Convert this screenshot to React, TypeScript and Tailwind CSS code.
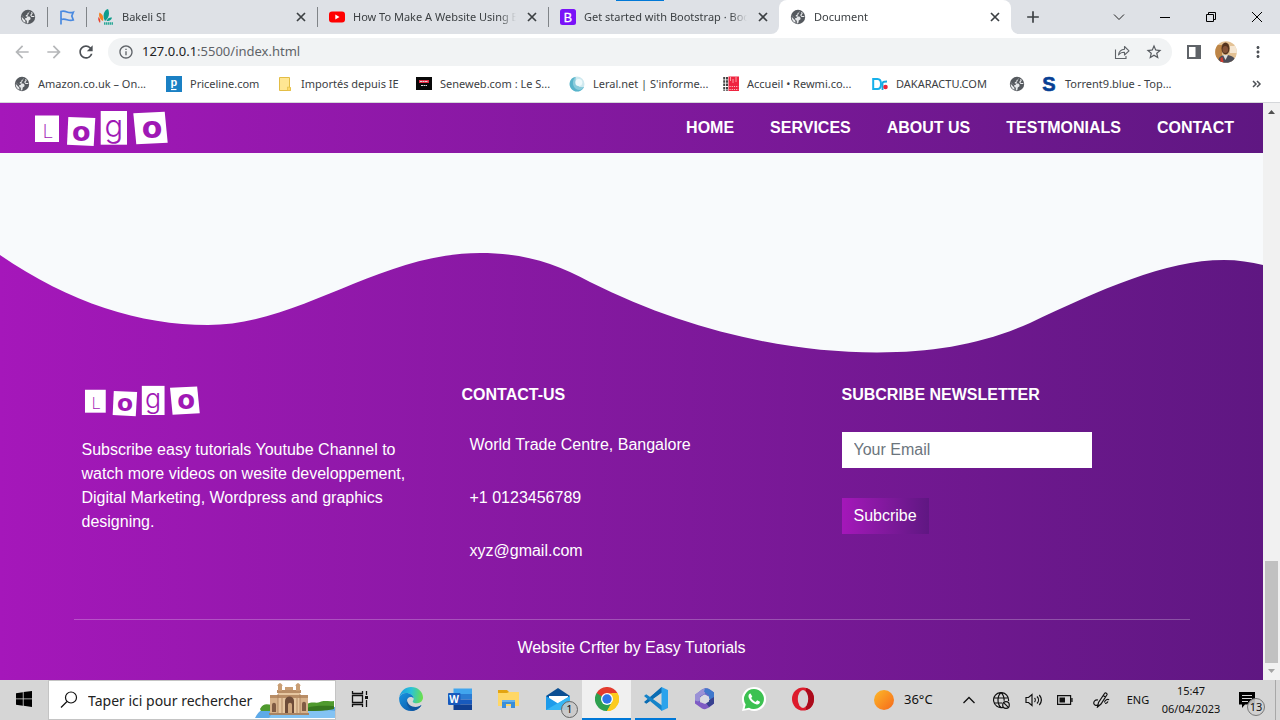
import React from "react";
import type { ReactNode } from "react";
import {
  MdAdd,
  MdArrowBack,
  MdArrowForward,
  MdInfoOutline,
  MdMoreVert,
  MdRefresh,
  MdStarBorder,
} from "react-icons/md";

/* ---------- Browser icons ---------- */

function Globe() {
  return (
    <svg viewBox="0 0 16 16" className="size-4 shrink-0">
      <circle cx="8" cy="8" r="7.200" fill="#55595e" />
      <path
        d="M10.200 1.600L9.800 3.300 7.500 4v1.500L5.800 6.300v1.200h3.600l1.100 1.300v1.400l-1.700 1.300-.5 2.700-1.500.2v-2.600L5.200 10.400V9L2 6.600 1.900 8l3.500 3.700v2.100A6.300 6.300 0 0 1 1.700 8.500L2 6.700l3 2.400h1.500"
        fill="#e6e8ea"
      />
      <path d="M14.300 7.500h-2.500l-1-1.500 1.300-1.300-.5-1.500" fill="none" stroke="#e6e8ea" strokeWidth="1.100" />
    </svg>
  );
}

function CloseIcon() {
  return (
    <svg viewBox="0 0 10 10" className="size-2.5" fill="none" stroke="#3c4043" strokeWidth="1.700">
      <path d="M1 1l8 8M9 1L1 9" />
    </svg>
  );
}

function FlagIcon() {
  return (
    <svg viewBox="0 0 16 16" className="size-4" fill="none" stroke="#4a8ae0" strokeWidth="1.700">
      <path d="M2 15.500V2.500C4.500 1.800 6 2.200 8 3s4 1 6.300.2L12.800 7l1.500 4c-2.300.8-4.300.4-6.300-.3s-4-.8-6-.2" />
    </svg>
  );
}

function BakeliIcon() {
  return (
    <svg viewBox="0 0 16 16" className="size-4 shrink-0">
      <path d="M7 12C4 7 6 1 10 0c2 4 1 9-3 12z" fill="#0d9c8c" />
      <path d="M5 12C1 10 .5 6 1.500 3.500 4.500 5 6 8 5 12z" fill="#f58220" />
      <path d="M2 14C0 12 0 9 .5 8c1.500 1.500 2.500 4 1.500 6z" fill="#e8402c" />
      <path d="M8.500 12c1-3 3.500-4 5.500-3.500-.5 2.500-2.500 4-5.500 3.500z" fill="#0d9c8c" />
      <path d="M6 14.500h9" stroke="#2aa897" strokeWidth="2.400" strokeDasharray="1.500 .5" />
    </svg>
  );
}

function YoutubeIcon() {
  return (
    <svg viewBox="0 0 16 16" className="size-4 shrink-0">
      <rect y="2.500" width="16" height="11" rx="3" fill="#f00" />
      <path d="M6.300 5.600v4.800L10.500 8z" fill="#fff" />
    </svg>
  );
}

function BootstrapIcon() {
  return (
    <svg viewBox="0 0 16 16" className="size-4 shrink-0">
      <rect width="16" height="16" rx="2.500" fill="#7a12f8" />
      <text x="8" y="12.500" textAnchor="middle" fontSize="12.500" fill="#fff" stroke="#fff" strokeWidth=".3" fontFamily="Liberation Sans, sans-serif">B</text>
    </svg>
  );
}

function PricelineIcon() {
  return (
    <svg viewBox="0 0 16 16" className="size-4 shrink-0">
      <rect width="16" height="16" fill="#1a80c4" />
      <text x="4.500" y="9.500" fontSize="11" fontWeight="700" fill="#fff" fontFamily="Liberation Sans, sans-serif">p</text>
      <path d="M5 13.500h5.500" stroke="#fff" strokeWidth="1.200" />
    </svg>
  );
}

function FolderIcon() {
  return (
    <svg viewBox="0 0 16 16" className="size-4 shrink-0">
      <path d="M2.500 1.500h10v9.500l1 1v2.500h-11z" fill="#ffe693" stroke="#e3bd45" />
      <path d="M10.500 14.500V11l3 .5v3z" fill="#ffd968" stroke="#e3bd45" strokeWidth=".7" />
    </svg>
  );
}

function SenewebIcon() {
  return (
    <svg viewBox="0 0 16 16" className="size-4 shrink-0">
      <rect y="1" width="16" height="13" fill="#090909" />
      <path d="M3 5.500h10" stroke="#e62a45" strokeWidth="3" />
      <path d="M4 5.500h8M5 9.500h6" stroke="#ddd" strokeDasharray="2 .5" />
    </svg>
  );
}

function LeralIcon() {
  return (
    <svg viewBox="0 0 16 16" className="size-4 shrink-0">
      <circle cx="8" cy="8" r="7.500" fill="#cfe9ef" />
      <path d="M4 1.800A7.500 7.500 0 1 0 15 11C10 13 5 9 6.500 1z" fill="#58b4cb" />
      <path d="M6.500 1C3 4 3 10 7 13c3 2 6 1 8-2-5 2-9.500-2-8.500-10z" fill="#8accdc" />
      <circle cx="9.800" cy="6.500" r="3.500" fill="#eef9fb" />
    </svg>
  );
}

function RewmiIcon() {
  return (
    <svg viewBox="0 0 16 16" className="size-4 shrink-0">
      <rect x="5.500" y=".5" width="10.500" height="14.500" fill="#ef2440" />
      <path d="M1.200 1v14M4 1v14" stroke="#444" strokeWidth="2" strokeDasharray="2.500 .8" />
      <path d="M7.500 1v4M10 3v4M13 1v5" stroke="#fbb" strokeWidth=".8" />
      <path d="M6.500 10.500h9M6.500 13.500h9" stroke="#fcc" strokeWidth=".9" strokeDasharray="1.200 1" />
    </svg>
  );
}

function DakarIcon() {
  return (
    <svg viewBox="0 0 16 16" className="size-4 shrink-0" fill="none">
      <path d="M1.200 3h4.300c2.500 0 3.500 2 3.500 5s-1 5-3.500 5H1.200z" stroke="#16b0ea" strokeWidth="2" />
      <path d="M10.500 14V7.500c0-1.500 1-2 4.500-2" stroke="#1aa8de" strokeWidth="1.800" />
      <circle cx="13.500" cy="11" r="2.300" fill="#ee2438" />
    </svg>
  );
}

function TorrentIcon() {
  return (
    <svg viewBox="0 0 16 16" className="size-4 shrink-0">
      <text x="8" y="15" textAnchor="middle" fontSize="20" fontWeight="700" fill="#073f94" stroke="#073f94" strokeWidth=".6" fontFamily="Liberation Sans, sans-serif">S</text>
    </svg>
  );
}

function ShareIcon() {
  return (
    <svg viewBox="0 0 16 16" className="size-4" fill="none" stroke="#5f6368" strokeWidth="1.100">
      <path d="M1.500 5.500v9H12V12" />
      <path d="M4.500 11C5 7.500 7 5.500 10.500 5.300V2.500L15 6.800 10.500 11V8.300C7.500 8.200 6 9 4.500 11z" strokeLinejoin="round" />
    </svg>
  );
}

function Avatar() {
  return (
    <svg viewBox="0 0 22 22" className="size-[22px]">
      <defs>
        <clipPath id="avatar-clip">
          <circle cx="11" cy="11" r="10.800" />
        </clipPath>
      </defs>
      <g clipPath="url(#avatar-clip)">
        <rect width="22" height="22" fill="#e3c194" />
        <path d="M0 4h7v18H0z" fill="#bd8547" />
        <path d="M15 5h7v7h-7z" fill="#f5e6d2" />
        <path d="M3 22c0-6 3-8 8-8s9 2 11 8z" fill="#4d4d57" />
        <path d="M8 14l2.500 5 2.500-5z" fill="#ddd" />
        <path d="M5.500 17l2-1 1 5h-3z" fill="#d33a30" />
        <ellipse cx="10.500" cy="7.500" rx="4" ry="6" fill="#55341f" />
        <ellipse cx="10.300" cy="8.500" rx="2.800" ry="3.500" fill="#855338" />
      </g>
    </svg>
  );
}

/* ---------- Browser chrome ---------- */

function IconButton({ label, className, children }: { label: string; className?: string; children: ReactNode }) {
  return (
    <button type="button" aria-label={label} className={`flex shrink-0 items-center justify-center ${className ?? ""}`}>
      {children}
    </button>
  );
}

function Tab({ icon, title, active }: { icon: ReactNode; title: string; active?: boolean }) {
  return (
    <div
      className={`flex h-full items-center gap-2 pr-2 pl-[11px] ${
        active ? "w-[232px] rounded-t-lg bg-white" : "w-[230px]"
      }`}
    >
      {icon}
      <span className="min-w-0 flex-1 overflow-hidden mask-r-from-90% text-[11px] whitespace-nowrap text-[#3c4043]">
        {title}
      </span>
      <IconButton label={`Fermer ${title}`} className="size-4">
        <CloseIcon />
      </IconButton>
    </div>
  );
}

function Divider() {
  return <span className="h-5 w-px shrink-0 bg-[#808488]" />;
}

function TabStrip() {
  return (
    <div className="relative flex h-[34px] bg-white">
      <div className="flex items-center rounded-br-lg bg-[#dee1e6]">
        <span className="flex w-[47px] justify-center pl-2"><Globe /></span>
        <Divider />
        <span className="flex w-[38px] justify-center"><FlagIcon /></span>
        <Divider />
        <Tab icon={<BakeliIcon />} title="Bakeli SI" />
        <Divider />
        <Tab icon={<YoutubeIcon />} title="How To Make A Website Using B" />
        <Divider />
        <Tab icon={<BootstrapIcon />} title="Get started with Bootstrap · Boo" />
      </div>
      <div className="bg-[#dee1e6]">
        <Tab icon={<Globe />} title="Document" active />
      </div>
      <div className="flex flex-1 items-center justify-between rounded-bl-lg bg-[#dee1e6]">
        <IconButton label="Nouvel onglet" className="ml-3 size-5">
          <MdAdd className="size-5 text-[#3c4043]" />
        </IconButton>
        <div className="flex h-7">
          <IconButton label="Rechercher dans les onglets" className="w-[46px]">
            <svg viewBox="0 0 12 12" className="size-3" fill="none" stroke="#222"><path d="M1 3.500l5 5 5-5" /></svg>
          </IconButton>
          <IconButton label="Réduire" className="w-[46px]">
            <svg viewBox="0 0 10 10" className="size-2.5" stroke="#000"><path d="M0 5.500h10" /></svg>
          </IconButton>
          <IconButton label="Restaurer" className="w-[46px]">
            <svg viewBox="0 0 10 10" className="size-2.5" fill="none" stroke="#000"><path d="M.5 2.500h7v7h-7zM2.500 2.500v-2h7v7h-2" /></svg>
          </IconButton>
          <IconButton label="Fermer" className="w-[46px]">
            <svg viewBox="0 0 10 10" className="size-2.5" fill="none" stroke="#000"><path d="M0 0l10 10M10 0L0 10" /></svg>
          </IconButton>
        </div>
      </div>
      <span className="absolute top-0 left-[616px] h-px w-12 bg-[#0078d7]" />
    </div>
  );
}

function Toolbar() {
  return (
    <div className="flex h-9 items-center bg-white px-1.5">
      <IconButton label="Précédent" className="w-8"><MdArrowBack className="size-5 text-[#b5b7b9]" /></IconButton>
      <IconButton label="Suivant" className="w-8"><MdArrowForward className="size-5 text-[#b5b7b9]" /></IconButton>
      <IconButton label="Actualiser" className="w-8"><MdRefresh className="size-5 text-[#4d5156]" /></IconButton>
      <div className="mx-1.5 flex h-7 flex-1 items-center rounded-full bg-[#f1f3f4] px-2.5">
        <MdInfoOutline className="size-4 text-[#5f6368]" />
        <div className="ml-2 text-[13px] text-[#5f6368]">
          <span className="text-[#202124]">127.0.0.1</span>:5500/index.html
        </div>
        <div className="ml-auto flex gap-4">
          <IconButton label="Partager"><ShareIcon /></IconButton>
          <IconButton label="Ajouter aux favoris" className="size-4">
            <MdStarBorder className="size-[18px] shrink-0 text-[#55595e]" />
          </IconButton>
        </div>
      </div>
      <IconButton label="Panneau latéral" className="w-8">
        <svg viewBox="0 0 14 14" className="size-3.5"><path d="M1 1h12v12H1z" fill="none" stroke="#5f6368" strokeWidth="2" /><path d="M8.500 0H14v14H8.500z" fill="#5f6368" /></svg>
      </IconButton>
      <IconButton label="Profil" className="w-8"><Avatar /></IconButton>
      <IconButton label="Menu" className="w-8"><MdMoreVert className="size-[18px] text-[#4d5156]" /></IconButton>
    </div>
  );
}

function Bookmark({ icon, label, className }: { icon: ReactNode; label: string; className: string }) {
  return (
    <a href="#" aria-label={label || "Favori"} className={`flex shrink-0 items-center gap-2 whitespace-nowrap ${className}`}>
      {icon}
      {label}
    </a>
  );
}

function BookmarksBar() {
  return (
    <nav className="flex h-[33px] items-center border-b border-[#d5d7da] bg-white pb-1 pl-3.5 text-[11px] text-[#3c4043]">
      <Bookmark className="w-[152px]" icon={<Globe />} label="Amazon.co.uk – On..." />
      <Bookmark className="w-[111px]" icon={<PricelineIcon />} label="Priceline.com" />
      <Bookmark className="w-[139px]" icon={<FolderIcon />} label="Importés depuis IE" />
      <Bookmark className="w-[153px]" icon={<SenewebIcon />} label="Seneweb.com : Le S..." />
      <Bookmark className="w-[154px]" icon={<LeralIcon />} label="Leral.net | S'informe..." />
      <Bookmark className="w-[149px]" icon={<RewmiIcon />} label="Accueil • Rewmi.co..." />
      <Bookmark className="w-[137px]" icon={<DakarIcon />} label="DAKARACTU.COM" />
      <Bookmark className="w-8" icon={<Globe />} label="" />
      <Bookmark className="w-[152px]" icon={<TorrentIcon />} label="Torrent9.blue - Top..." />
      <IconButton label="Autres favoris" className="mr-[18px] ml-auto">
        <svg viewBox="0 0 10 8" className="h-2 w-2.5" fill="none" stroke="#4d5156" strokeWidth="1.500"><path d="M1 1l3 3-3 3M5 1l3 3-3 3" /></svg>
      </IconButton>
    </nav>
  );
}

/* ---------- Web page ---------- */

function Logo({ className }: { className: string }) {
  return (
    <svg viewBox="0 0 133 37" className={className} role="img" aria-label="Logo">
      <g fill="#fff">
        <rect y="5.500" width="24" height="26.500" />
        <path d="M33.300 7l27 1-1.600 28-26.700-1.300z" />
        <rect x="65.700" y="1" width="26.300" height="33.700" />
        <path d="M98.300 3.300l31.400-1.600 3 31-31.400 1.600z" />
      </g>
      <g fill="#a018b5" textAnchor="middle">
        <text x="12.500" y="28" fontSize="19" fontWeight="200" fontFamily="DejaVu Sans, sans-serif">L</text>
        <text x="46.300" y="30.500" fontSize="27" fontWeight="700" fontFamily="DejaVu Sans, sans-serif">o</text>
        <text x="78.800" y="26.500" fontSize="31" fontWeight="300" fontFamily="Inter, sans-serif">g</text>
        <text x="117" y="28" fontSize="30" fontWeight="700" fontFamily="DejaVu Sans, sans-serif">o</text>
      </g>
    </svg>
  );
}

const LINKS = ["HOME", "SERVICES", "ABOUT US", "TESTMONIALS", "CONTACT"];

function SiteHeader() {
  return (
    <header className="flex h-[50px] items-center justify-between bg-linear-to-r from-[#a517ba] to-[#5f1782] pr-[29px] pl-[35px]">
      <Logo className="h-[37px] w-[133px]" />
      <nav className="flex gap-9 text-[16px] leading-6 font-bold text-white">
        {LINKS.map((link) => (
          <a key={link} href="#">{link}</a>
        ))}
      </nav>
    </header>
  );
}

function SiteFooter() {
  return (
    <footer className="flex-1 bg-linear-to-r from-[#a517ba] to-[#5f1782] text-[16px] leading-6 text-white">
      <svg viewBox="0 153 1263 205" preserveAspectRatio="none" className="block h-[205px] w-full">
        <path
          fill="#f8fafc"
          d="M0 153V255C70 303 140 325 208 325C300 325 380 253 480 253C522 253 555 263 590 282C685 330 787 352.500 877 352.500C935 352.500 983 344 1030 323C1100 290 1165 260 1224 260C1238 260 1251 262 1263 265V153Z"
        />
      </svg>
      <div className="mx-auto max-w-[1140px] pt-[25px]">
        <div className="grid grid-cols-3">
          <section className="px-5">
            <Logo className="mt-0.5 ml-0.5 h-8 w-[117px]" />
            <p className="mt-[21px]">
              Subscribe easy tutorials Youtube Channel to watch more videos on wesite developpement, Digital
              Marketing, Wordpress and graphics designing.
            </p>
          </section>
          <section className="px-5">
            <h2 className="font-bold">CONTACT-US</h2>
            <address className="mt-[26px] flex flex-col gap-[29px] pl-2 not-italic">
              <p>World Trade Centre, Bangalore</p>
              <p>+1 0123456789</p>
              <p>xyz@gmail.com</p>
            </address>
          </section>
          <section className="px-5">
            <h2 className="font-bold">SUBCRIBE NEWSLETTER</h2>
            <form className="mt-[25px] flex flex-col items-start gap-[30px]" onSubmit={(e) => e.preventDefault()}>
              <input
                type="email"
                aria-label="Your Email"
                placeholder="Your Email"
                className="h-9 w-[250px] bg-white px-3 text-gray-900 outline-none placeholder:text-[#6c757d]"
              />
              <button type="submit" className="h-9 bg-linear-to-r from-[#a517ba] to-[#5f1782] px-3">
                Subcribe
              </button>
            </form>
          </section>
        </div>
        <hr className="mx-3 mt-14 border-white/25" />
        <p className="pt-4 pb-5 text-center">Website Crfter by Easy Tutorials</p>
      </div>
    </footer>
  );
}

function Scrollbar() {
  return (
    <div className="flex w-[17px] shrink-0 flex-col items-center bg-[#f1f1f1]">
      <svg viewBox="0 0 17 17" className="size-[17px]"><path d="M5 11h7L8.500 7z" fill="#505050" /></svg>
      <span className="flex-1" />
      <span className="h-[102px] w-[13px] bg-[#c1c1c1]" />
      <svg viewBox="0 0 17 17" className="size-[17px]"><path d="M5 6h7l-3.500 4z" fill="#a3a3a3" /></svg>
    </div>
  );
}

/* ---------- Taskbar ---------- */

function GatewayArt() {
  return (
    <svg viewBox="0 0 80 36" className="h-9 w-20 shrink-0">
      <path d="M0 36c4-8 8-10 20-11h60v11z" fill="#5eaae8" />
      <path d="M18 30c16-3 44-4 62-1v7H14z" fill="#83c3f3" />
      <path d="M5 27c3-6 7-5 12-4v6H6zM52 22c6-3 9 0 13-2s9 0 14-1v8c-9 1-18 2-27 2z" fill="#4f9a2e" />
      <path d="M52 26c7-3 20-2 27-2v3c-9 2-18 2-27 2z" fill="#37781f" />
      <path d="M15 14h38v17H15z" fill="#d6b18a" />
      <path d="M23 8h22v24H23z" fill="#e6c6a0" />
      <path d="M15 13h38v3H15zM22 8h24v3H22z" fill="#b88d66" />
      <path d="M23 4h4v5h-4zM30 5h8v3h-8zM41 4h4v5h-4zM25 1c2 1 2.500 2 2.500 3h-5c0-1 .5-2 2.500-3zM43 1c2 1 2.500 2 2.500 3h-5c0-1 .5-2 2.500-3z" fill="#c99e74" />
      <path d="M30 32V19c0-6 9-6 9 0v13z" fill="#6e4c39" />
      <path d="M17 30v-7c0-3 4-3 4 0v7zM47 29v-7c0-3 4-3 4 0v7z" fill="#805b44" />
      <path d="M33 32v-9c0-3 4-3 4 0v9z" fill="#cfa77f" />
      <path d="M23 12v20M27 16v16M42 16v16M45 12v19" stroke="#a77e5c" strokeWidth=".8" />
      <path d="M14 31h40v2H14z" fill="#a98463" />
    </svg>
  );
}

function EdgeIcon() {
  return (
    <svg viewBox="0 0 24 24" className="size-6">
      <defs>
        <linearGradient id="edge-top" x1="0" x2="1" y1=".3" y2=".4">
          <stop offset="0" stopColor="#1b9de2" />
          <stop offset=".5" stopColor="#2bc3d6" />
          <stop offset="1" stopColor="#6be04b" />
        </linearGradient>
        <linearGradient id="edge-low" x1="0" x2="1" y1="0" y2="1">
          <stop offset="0" stopColor="#1793e0" />
          <stop offset="1" stopColor="#0c4f9f" />
        </linearGradient>
      </defs>
      <path d="M.3 10C1.500 4 6.500 0 12 0c7 0 12 5 12 10.500 0 3.500-2.800 5.700-6 5.700-2.700 0-4.300-.9-4.300-1.800 0-.6 1-1.100 1-2.900C14.700 8.500 11 6 7 6 4 6 1.500 7.500.3 10z" fill="url(#edge-top)" />
      <path d="M.2 10.500C1.300 7.500 4 6 7 6c4.300 0 7.700 2.500 7.700 5.500-.7-1-1.700-1.500-3-1.500-2.700 0-4.200 2.500-3.700 5.200.7 4 5 5.800 8.500 5.300 2.500-.3 4.500-1.300 6-2.500C20.500 21.700 16.500 24 12 24 4.500 24-.5 17.500.2 10.500z" fill="url(#edge-low)" />
      <path d="M8 13c-1.500 5 2.500 9.500 6.500 10.700 3.500-.7 6.500-3 8-5.700-4.500 3.500-13.500 2.500-14.500-5z" fill="#10579f" />
    </svg>
  );
}

function WordIcon() {
  return (
    <svg viewBox="0 0 24 24" className="size-6">
      <rect x="5.500" y="1.500" width="18.500" height="5.500" fill="#41a5ee" />
      <rect x="5.500" y="7" width="18.500" height="5.500" fill="#2b7cd3" />
      <rect x="5.500" y="12.500" width="18.500" height="5" fill="#185abd" />
      <rect x="5.500" y="17.500" width="18.500" height="5.500" fill="#103f91" />
      <rect y="6" width="12.500" height="12" rx="1" fill="#185abd" />
      <text x="6.200" y="15.500" textAnchor="middle" fontSize="10" fontWeight="700" fill="#fff" fontFamily="Open Sans, sans-serif">W</text>
    </svg>
  );
}

function ExplorerIcon() {
  return (
    <svg viewBox="0 0 24 24" className="size-6">
      <path d="M1 3h9l2 2H22v8H1z" fill="#e3a411" />
      <path d="M1 6h9l2-1h10v14H1z" fill="#ffd766" />
      <path d="M5 21v-8h13v8h-4v-4H9v4z" fill="#3a8ed8" />
      <path d="M5 13h13v2H5z" fill="#65b1ec" />
    </svg>
  );
}

function MailIcon() {
  return (
    <svg viewBox="0 0 24 24" className="size-6">
      <path d="M0 9l12-8 12 8v6H0z" fill="#0b4f93" />
      <path d="M3 9h19v9H3z" fill="#fff" />
      <path d="M0 9l12 7.500L24 9v14H0z" fill="#1d9bea" />
      <path d="M0 23L24 9v14z" fill="#35b6f5" />
    </svg>
  );
}

function ChromeIcon() {
  return (
    <svg viewBox="0 0 24 24" className="size-6">
      <path d="M12 12L1.600 6A12 12 0 0 1 22.400 6z" fill="#e33b2e" />
      <path d="M12 12L22.400 6A12 12 0 0 1 12 24z" fill="#fccb1f" />
      <path d="M12 12v12A12 12 0 0 1 1.600 6z" fill="#2ea04f" />
      <path d="M12 6h10.400L17 15z" fill="#fccb1f" />
      <path d="M1.600 6L7 15l5-9z" fill="#2ea04f" />
      <path d="M1.600 6h20.800L12 6.500 7 9.500z" fill="#e33b2e" />
      <path d="M7 15l5 9 5-9z" fill="#2ea04f" />
      <path d="M17.200 15L12 24a12 12 0 0 0 10.400-18H17z" fill="#fccb1f" />
      <circle cx="12" cy="12" r="6" fill="#fff" />
      <circle cx="12" cy="12" r="4.700" fill="#2f76e8" />
    </svg>
  );
}

function CodeIcon() {
  return (
    <svg viewBox="0 0 24 24" className="size-6">
      <path d="M17.500 0L1 15.200l1.200 1 .8-.1L18 5z" fill="#0b70b8" />
      <path d="M0 15l2.200 1.800L18 5.500V0z" fill="#0a6cb3" />
      <path d="M0 9l2.200-1.800L18 18.500V24z" fill="#1583c9" />
      <path d="M17.500 0L24 3v18l-6.500 3z" fill="#2ba3ec" />
    </svg>
  );
}

function OfficeIcon() {
  return (
    <svg viewBox="0 0 24 24" className="size-6">
      <path d="M9 2.500c3-2 6-1.500 8 0l4 3v8l-6-4-4-2-4 3v6l-5-3V8z" fill="#6667c8" />
      <path d="M9 2.500L2 7.500v9l5-3v-4l5-3V1.500z" fill="#9a91d6" />
      <path d="M12 1.500c3-.5 4.500.5 9 4v9l-5-3v-3l-5-4z" fill="#3f78cc" />
      <path d="M2 13.500v3l7 5c3 1.500 5 0 7-1l5-4v-5l-5 1.500-5 3.500z" fill="#7f5bc4" />
      <path d="M21 10v6.500l-5 3.500-3-4 3-3z" fill="#37418f" />
      <path d="M12 7.500l4 2.300v4.700L12 17l-4-2.500V9.800z" fill="#d9dae2" />
    </svg>
  );
}

function WhatsAppIcon() {
  return (
    <svg viewBox="0 0 24 24" className="size-6">
      <path d="M12 0a12 12 0 1 1-5 22.800L0 24l1.500-6A12 12 0 0 1 12 0z" fill="#fff" />
      <path d="M12 2a10 10 0 1 1-5 18.700L2.600 21.700 3.700 17.500A10 10 0 0 1 12 2z" fill="#3cc151" />
      <path d="M8.500 6.500c-1.500 0-2.500 2-1.800 4 1.300 3.500 4.300 6.300 8 7 1.800.2 3.300-1 3.300-2.700l-2.800-1.500-1.600 1.700c-2-.8-3.500-2.200-4.400-4l1.100-1.500z" fill="#fff" />
    </svg>
  );
}

function OperaIcon() {
  return (
    <svg viewBox="0 0 24 24" className="size-6">
      <ellipse cx="12" cy="12" rx="11" ry="11.500" fill="#dd1b2c" />
      <path d="M15 1c5 1 8 5.500 8 11s-3 10-8 11z" fill="#ab0b1c" />
      <ellipse cx="12" cy="12" rx="5.200" ry="9" fill="#d6d6d6" />
    </svg>
  );
}

function AppButton({ label, children, className }: { label: string; children: ReactNode; className?: string }) {
  return (
    <button
      type="button"
      aria-label={label}
      className={`relative flex h-full shrink-0 items-center justify-center border-b-2 ${className ?? "w-[49px] border-transparent"}`}
    >
      {children}
    </button>
  );
}

function TrayButton({ label, children, className }: { label: string; children: ReactNode; className?: string }) {
  return (
    <button type="button" aria-label={label} className={`flex h-full shrink-0 items-center justify-center ${className ?? "w-8"}`}>
      {children}
    </button>
  );
}

function Taskbar() {
  return (
    <div className="flex h-10 items-center bg-[#d6d6d6] text-[#111]">
      <AppButton label="Démarrer" className="w-12 border-transparent">
        <svg viewBox="0 0 16 16" className="size-4"><path d="M0 2.200L6.800 1.200v6.300H0zM7.600 1.100L16 0v7.500H7.600zM0 8.300h6.800v6.500L0 13.800zM7.600 8.300H16V16l-8.400-1.200z" /></svg>
      </AppButton>
      <label className="flex h-full w-[288px] shrink-0 items-center overflow-hidden border border-[#c4c4c4] bg-white pl-[11px]">
        <svg viewBox="0 0 18 18" className="size-[18px] shrink-0" fill="none" stroke="#111" strokeWidth="1.200"><circle cx="11" cy="6.500" r="5.500" /><path d="M7 10.500L1 16.500" /></svg>
        <input
          type="text"
          aria-label="Rechercher"
          placeholder="Taper ici pour rechercher"
          className="ml-2.5 min-w-0 flex-1 text-[14px] outline-none placeholder:text-[#222]"
        />
        <GatewayArt />
      </label>
      <AppButton label="Affichage des tâches" className="w-12 border-transparent">
        <svg viewBox="0 0 18 18" className="size-[18px]" fill="none" stroke="#111" strokeWidth="1.300"><path d="M1.500 1v2.500h10V1M1.500 17v-2.500h10V17M1.500 5.500h10v7h-10zM15.500 1v4M15.500 10v7" /><path d="M14 6h3v3h-3z" fill="#111" stroke="none" /></svg>
      </AppButton>
      <div className="ml-0.5 flex h-full">
        <AppButton label="Microsoft Edge"><EdgeIcon /></AppButton>
        <AppButton label="Word"><WordIcon /></AppButton>
        <AppButton label="Explorateur de fichiers"><ExplorerIcon /></AppButton>
        <AppButton label="Courrier">
          <MailIcon />
          <span className="absolute right-1 bottom-0 flex size-[17px] items-center justify-center rounded-full border border-[#666] bg-[#c8c8c8]/80 text-[11px]">
            1
          </span>
        </AppButton>
        <AppButton label="Google Chrome" className="w-[49px] border-[#0078d7] bg-[#f0f0f0]"><ChromeIcon /></AppButton>
        <div className="px-1">
          <button type="button" aria-label="Visual Studio Code" className="flex h-full w-[41px] items-center justify-center border-b-2 border-[#0078d7]">
            <CodeIcon />
          </button>
        </div>
        <AppButton label="Microsoft 365"><OfficeIcon /></AppButton>
        <AppButton label="WhatsApp"><WhatsAppIcon /></AppButton>
        <AppButton label="Opera"><OperaIcon /></AppButton>
      </div>
      <div className="ml-auto flex h-full items-center">
        <button type="button" className="flex w-[79px] items-center gap-2.5 text-[13px] whitespace-nowrap">
          <span className="size-5 rounded-full bg-linear-to-br from-[#fbb829] to-[#f5661b]" />
          36°C
        </button>
        <TrayButton label="Icônes cachées">
          <svg viewBox="0 0 12 8" className="h-2 w-3" fill="none" stroke="#111" strokeWidth="1.300"><path d="M.5 7L6 1.500 11.500 7" /></svg>
        </TrayButton>
        <TrayButton label="Réseau">
          <svg viewBox="0 0 17 17" className="size-[17px]" fill="none" stroke="#111" strokeWidth="1.200"><path d="M10 15.300A7.500 7.500 0 1 1 15.500 9M1 6h14M1 11h8M8 .7C4 4 4 12 8 15.500M8 .7c2.500 2 3.200 5 3.200 8" /><circle cx="13" cy="13" r="3.300" /><path d="M10.800 10.800l4.400 4.400" /></svg>
        </TrayButton>
        <TrayButton label="Volume">
          <svg viewBox="0 0 17 14" className="h-3.5 w-[17px]" fill="none" stroke="#111" strokeWidth="1.200"><path d="M1 4.500h2.500L7 1.500v11L3.500 9.500H1zM9.500 5c1 1 1 3 0 4M12 3.500c2 2 2 5 0 7M14.300 2c2.500 3 2.500 7 0 10" /></svg>
        </TrayButton>
        <TrayButton label="Batterie">
          <svg viewBox="0 0 16 10" className="h-2.5 w-4" fill="none" stroke="#111" strokeWidth="1.200"><path d="M.6.600h13v8.800H.6zM15 3v4" /><path d="M2.500 2.500h5.500v5H2.500z" fill="#111" stroke="none" /></svg>
        </TrayButton>
        <TrayButton label="Stylet" className="w-10">
          <svg viewBox="0 0 17 16" className="h-4 w-[17px]" fill="none" stroke="#111" strokeWidth="1.200"><path d="M5 8C2 7.500.5 9.500.8 11.500s3 2.500 4.700 1M4.500 15l1-4.500L11.500 1.500c1-1.300 3.200 0 2.300 1.500L8 12zM10 3.500l2.500 1.500M11.500 10.500c0-2.500 3.500-4 4.500-2.500M12 11.500c1.500 0 2.500-1 3-2" /></svg>
        </TrayButton>
        <TrayButton label="Langue" className="w-[34px] text-[11px]">ENG</TrayButton>
        <TrayButton label="Date et heure" className="w-[72px] text-[11px]">
          <span className="leading-[18px]">15:47<br />06/04/2023</span>
        </TrayButton>
        <button type="button" aria-label="Notifications" className="relative flex h-full w-10 items-center justify-center">
          <svg viewBox="0 0 16 16" className="size-4"><path d="M0 0h16v12.500H6L3 16v-3.500H0z" /><path d="M3 3.500h10M3 6.500h10M3 9.500h6" stroke="#d6d6d6" /></svg>
          <span className="absolute right-0.5 bottom-1 flex size-[18px] items-center justify-center rounded-full border border-[#777] bg-[#cfcfcf]/90 text-[11px]">
            13
          </span>
        </button>
        <span className="ml-2 h-full w-[5px] border-l border-[#a8a8a8]" />
      </div>
    </div>
  );
}

export default function App() {
  return (
    <div className="flex min-h-screen flex-col overflow-hidden font-['Noto_Sans','Open_Sans',sans-serif]">
      <TabStrip />
      <Toolbar />
      <BookmarksBar />
      <div className="flex flex-1">
        <main className="flex min-w-0 flex-1 flex-col font-['Liberation_Sans',Arial,sans-serif]">
          <SiteHeader />
          <SiteFooter />
        </main>
        <Scrollbar />
      </div>
      <Taskbar />
    </div>
  );
}
